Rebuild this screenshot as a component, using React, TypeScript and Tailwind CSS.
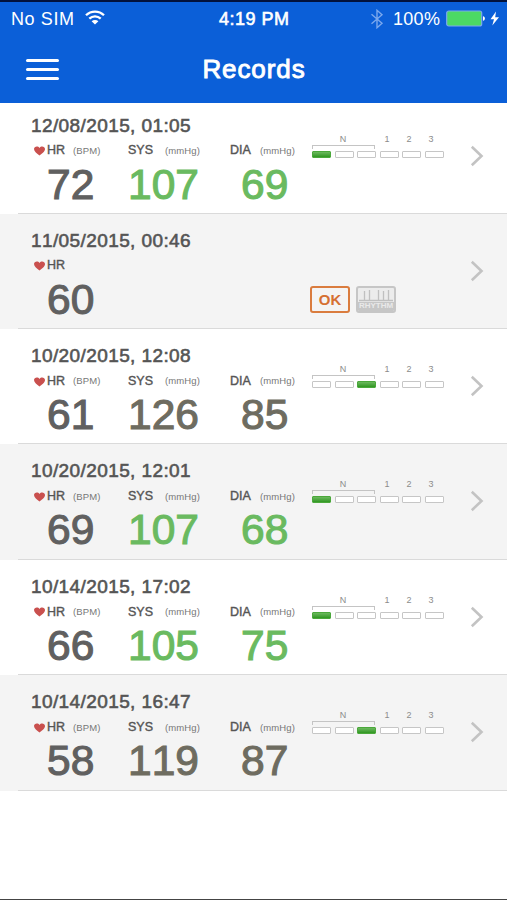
import clsx from 'clsx';

interface HealthRecord {
  date: string;
  hr: number;
  sys?: number;
  dia?: number;
  level?: number;
  normal?: boolean;
}

const records: HealthRecord[] = [
  { date: '12/08/2015, 01:05', hr: 72, sys: 107, dia: 69, level: 0, normal: true },
  { date: '11/05/2015, 00:46', hr: 60 },
  { date: '10/20/2015, 12:08', hr: 61, sys: 126, dia: 85, level: 2 },
  { date: '10/20/2015, 12:01', hr: 69, sys: 107, dia: 68, level: 0, normal: true },
  { date: '10/14/2015, 17:02', hr: 66, sys: 105, dia: 75, level: 0, normal: true },
  { date: '10/14/2015, 16:47', hr: 58, sys: 119, dia: 87, level: 2 },
];

function StatusBar() {
  return (
    <div className="flex h-[34px] items-center text-[18px] leading-none">
      <div className="flex w-[219px] items-center pl-[11px]">
        <span className="w-[74px] tracking-[0.6px]">No SIM</span>
        <svg className="-mt-[3px] h-[15px] w-[20px]" viewBox="0 0 20 15" fill="none" stroke="white" strokeWidth="2.3">
          <path d="M1 5.2C6 .3 14 .3 19 5.2" />
          <path d="M4.3 8.6C7.6 5.5 12.4 5.5 15.7 8.6" />
          <path d="M10 14.5 6.6 11.2C8.5 9.5 11.5 9.5 13.4 11.2Z" fill="white" stroke="none" />
        </svg>
      </div>
      <span className="w-[151px] whitespace-nowrap tracking-[0.5px] [-webkit-text-stroke:0.6px_white]">4:19 PM</span>
      <svg className="h-[20px] w-[14px]" viewBox="0 0 14 20" fill="none" stroke="#7ba8ed" strokeWidth="1.4">
        <path d="M1.5 5.3 12 14.2 7 18.7V1.3L12 5.8 1.5 14.7" />
      </svg>
      <span className="ml-[9px] w-[53px] tracking-[0.3px]">100%</span>
      <svg className="-mt-px h-[17px] w-[54px]" viewBox="0 0 54 17">
        <rect x="0.7" y="1" width="35" height="15" rx="2" fill="#4cd964" stroke="#7da9ee" strokeWidth="1.2" />
        <path d="M37 6.2C39.5 6.5 39.5 10.5 37 10.8Z" fill="white" />
        <path d="M50 1.5 44.5 9.2H48L46.3 15.5 53 7.3H49.2Z" fill="white" />
      </svg>
    </div>
  );
}

function Header() {
  return (
    <header className="h-[102.5px] border-t-2 border-[#02123c] bg-[#0b5fd8] text-white">
      <StatusBar />
      <div className="flex h-[66px] items-center px-[26px]">
        <button className="flex w-[33px] flex-col gap-[6px]" aria-label="Menu">
          <span className="h-[3px] rounded-full bg-white" />
          <span className="h-[3px] rounded-full bg-white" />
          <span className="h-[3px] rounded-full bg-white" />
        </button>
        <h1 className="flex-1 pr-[32px] text-center text-[26px] leading-none tracking-[0.9px] [-webkit-text-stroke:0.9px_white]">
          Records
        </h1>
      </div>
    </header>
  );
}

function Heart() {
  return (
    <svg className="mt-px mr-[2px] h-[10px] w-[11px]" viewBox="0 0 11 10">
      <path d="M5.5 9.6C3 7.6 0 5.5 0 3 0 .2 4-.6 5.5 1.9 7-.6 11 .2 11 3 11 5.5 8 7.6 5.5 9.6Z" fill="#c9504e" />
    </svg>
  );
}

interface MetricProps {
  label: string;
  unit?: string;
  value: number;
  className: string;
  labelClass: string;
  valueClass: string;
}

function Metric({ label, unit, value, className, labelClass, valueClass }: MetricProps) {
  return (
    <div className={className}>
      <div className="flex h-[14px] items-center leading-none whitespace-nowrap">
        {label === 'HR' && <Heart />}
        <span className={clsx('text-[12.5px] text-[#555] [-webkit-text-stroke:0.4px_#555]', labelClass)}>{label}</span>
        {unit && <span className="text-[9.5px] tracking-[0.1px] text-[#777]">{unit}</span>}
      </div>
      <div className={clsx('mt-[6px] text-[42.5px] leading-[42px]', valueClass)}>{value}</div>
    </div>
  );
}

function Gauge({ level }: { level: number }) {
  return (
    <div className="mt-[-9px] w-[132px]">
      <div className="flex h-[9px] text-[9px] leading-[9px] text-[#8c8c8c]">
        <span className="w-[62px] text-center">N</span>
        <span className="w-[26px] text-center">1</span>
        <span className="w-[18px] text-center">2</span>
        <span className="w-[26px] text-center">3</span>
      </div>
      <div className="mt-px h-[4px] w-[63px] border border-b-0 border-[#c4c4c4]" />
      <div className="mt-[2px] flex justify-between">
        {[0, 1, 2, 3, 4, 5].map((i) => (
          <span
            key={i}
            className={clsx(
              'h-[7px] w-[19px] rounded-[1px] border',
              i === level ? 'border-[#4ba83b] bg-linear-to-b from-[#6bb95d] to-[#2f9720]' : 'border-[#c6c6c6] bg-white'
            )}
          />
        ))}
      </div>
    </div>
  );
}

function RhythmBadges() {
  return (
    <div className="mt-[27px] ml-[182px] flex gap-[6px]">
      <span className="flex h-[27px] w-[40px] items-center justify-center rounded-[3px] border-2 border-[#da7c3e] pt-px text-[15px] leading-none font-bold text-[#d67032]">
        OK
      </span>
      <div className="flex h-[27px] w-[40px] flex-col overflow-hidden rounded-[3px] border-2 border-[#c6c6c6] bg-[#ececec]">
        <svg className="h-[14px] w-full shrink-0" viewBox="0 0 36 14" fill="none" stroke="#c0c0c0" strokeWidth="1.3">
          <path d="M1 12.5H35M6.5 12V3M11.5 12V2M20.5 12V2M25.5 12V3M30.5 12V2" />
        </svg>
        <span className="flex h-[9px] items-center justify-center bg-[#c6c6c6] text-[8px] leading-none font-bold text-[#e9e9e9]">
          RHYTHM
        </span>
      </div>
    </div>
  );
}

function RecordRow({ record, first, shaded }: { record: HealthRecord; first: boolean; shaded: boolean }) {
  const valueColor = record.normal
    ? 'text-[#6aba60] [-webkit-text-stroke:1.1px_#6aba60]'
    : 'text-[#6e6c60] [-webkit-text-stroke:1.1px_#6e6c60]';

  return (
    <li className={clsx(shaded ? 'bg-[#f4f4f4]' : 'bg-white')}>
      <div className={clsx('ml-[18px] flex border-b border-[#dadada]', first ? 'h-[111.2px] pt-[13px]' : 'h-[115.4px] pt-[17px]')}>
        <div className="w-[452px] pl-[13px]">
          <div className="h-[20px] text-[19px] leading-[20px] tracking-[0.4px] text-[#555] [-webkit-text-stroke:0.6px_#555]">
            {record.date}
          </div>
          <div className="mt-[8px] flex pl-[3px]">
            <Metric
              label="HR"
              unit={record.sys ? '(BPM)' : undefined}
              value={record.hr}
              className="w-[94px]"
              labelClass="w-[26px]"
              valueClass="pl-[13px] text-[#606060] [-webkit-text-stroke:1.1px_#606060]"
            />
            {record.sys && record.dia && record.level !== undefined ? (
              <>
                <Metric label="SYS" unit="(mmHg)" value={record.sys} className="w-[102px]" labelClass="w-[37px]" valueClass={valueColor} />
                <Metric label="DIA" unit="(mmHg)" value={record.dia} className="w-[82px]" labelClass="w-[30px]" valueClass={clsx('pl-[11px]', valueColor)} />
                <Gauge level={record.level} />
              </>
            ) : (
              <RhythmBadges />
            )}
          </div>
        </div>
        <svg className="mt-[29px] h-[22px] w-[14px]" viewBox="0 0 14 22" fill="none" stroke="#c3c3c3" strokeWidth="2.6">
          <path d="M1.8 1.8 11.5 11 1.8 20.2" />
        </svg>
      </div>
    </li>
  );
}

export default function App() {
  return (
    <div className="flex h-[900px] w-[507px] flex-col overflow-hidden border-b border-[#444] bg-white font-['Liberation_Sans',Arial,sans-serif] [font-kerning:none]">
      <Header />
      <ul>
        {records.map((record, i) => (
          <RecordRow key={record.date} record={record} first={i === 0} shaded={i % 2 === 1} />
        ))}
      </ul>
    </div>
  );
}
